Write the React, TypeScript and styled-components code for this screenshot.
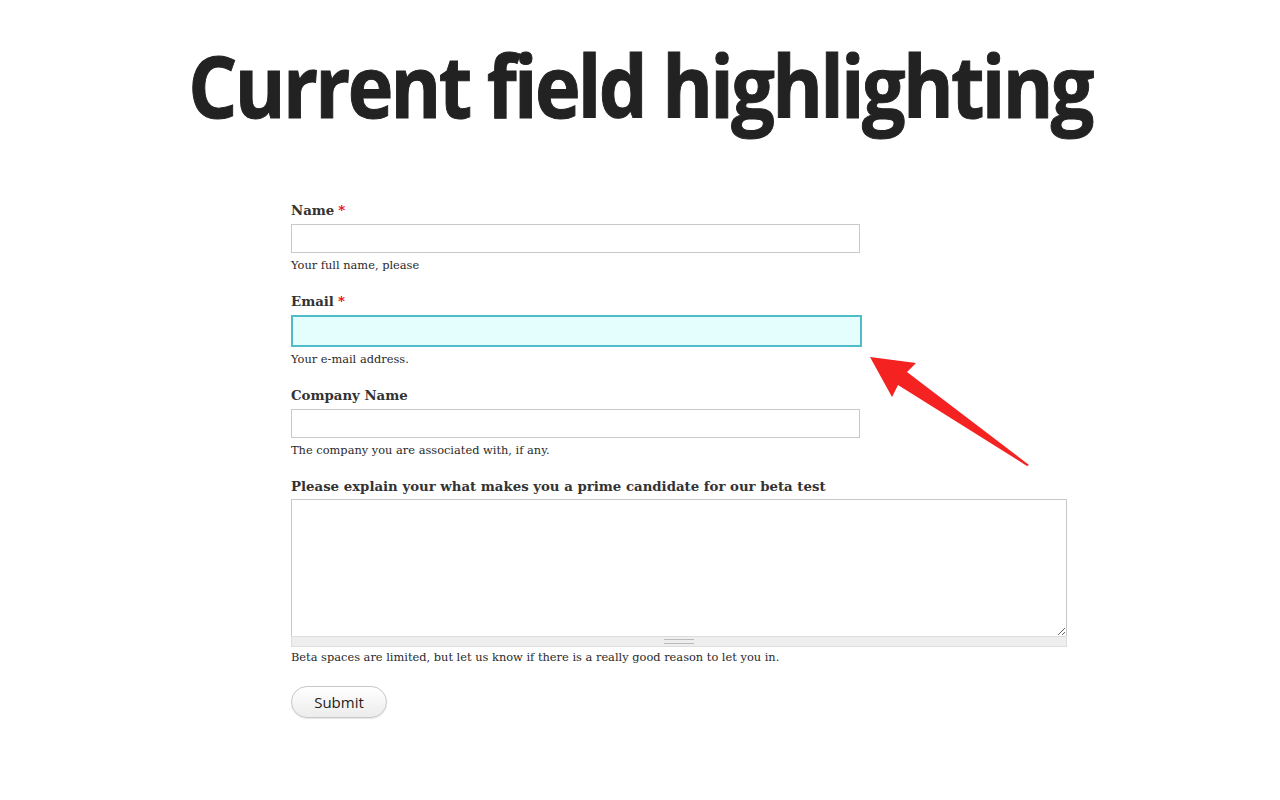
import React from "react";
import styled, { createGlobalStyle } from "styled-components";

const Global = createGlobalStyle`
  html, body { margin: 0; padding: 0; background: #fff; }
  body { font-family: "DejaVu Serif", Georgia, serif; }
`;

const Page = styled.div`
  position: relative;
  width: 1280px;
  height: 800px;
  overflow: hidden;
`;

const Title = styled.h1`
  margin: 0;
  padding-top: 30px;
  height: 110px;
  display: flex;
  justify-content: center;
  font-family: "Open Sans", "Liberation Sans", sans-serif;
  font-weight: 700;
  font-size: 86px;
  line-height: 110px;
  letter-spacing: -3px;
  color: #222;
`;

const TitleText = styled.span`
  display: inline-block;
  white-space: nowrap;
  transform: scaleX(0.898);
  transform-origin: center;
  -webkit-text-stroke: 1px #222;
`;

const Form = styled.form`
  display: flex;
  flex-direction: column;
  align-items: flex-start;
  padding-left: 291px;
  padding-top: 61px;
`;

const Field = styled.div<{ $wide?: boolean }>`
  display: flex;
  flex-direction: column;
  margin-bottom: 18px;
  width: ${(p) => (p.$wide ? "776px" : "571px")};
`;

const Label = styled.label<{ $tight?: boolean }>`
  font-family: "DejaVu Serif", Georgia, serif;
  font-weight: 700;
  font-size: 13.3px;
  line-height: 20px;
  color: #333;
  margin-bottom: ${(p) => (p.$tight ? "2px" : "3px")};
`;

const Required = styled.span`
  color: #e00;
  margin-left: 4px;
`;

const Input = styled.input<{ $focused?: boolean }>`
  box-sizing: border-box;
  width: ${(p) => (p.$focused ? "571px" : "569px")};
  height: ${(p) => (p.$focused ? "32px" : "29px")};
  margin: 0;
  border: ${(p) => (p.$focused ? "2px solid #4fbdc9" : "1px solid #c9c9c9")};
  background: ${(p) => (p.$focused ? "#e4fefd" : "#fff")};
  outline: none;
  font-size: 14px;
`;

const TextArea = styled.textarea`
  box-sizing: border-box;
  display: block;
  width: 776px;
  height: 137px;
  margin: 0;
  border: 1px solid #c9c9c9;
  border-bottom: none;
  background: #fff;
  outline: none;
  resize: vertical;
`;

const Grippie = styled.div`
  box-sizing: border-box;
  width: 776px;
  height: 11px;
  background: #eee;
  border: 1px solid #ddd;
  display: flex;
  align-items: center;
  justify-content: center;
`;

const GripLines = styled.div`
  width: 30px;
  height: 3px;
  border-top: 1px solid #bbb;
  border-bottom: 1px solid #bbb;
`;

const Description = styled.div<{ $tight?: boolean }>`
  font-family: "DejaVu Serif", Georgia, serif;
  font-size: 11.4px;
  line-height: 18px;
  color: #2a2a2a;
  margin-top: ${(p) => (p.$tight ? "1px" : "3px")};
`;

const SubmitButton = styled.button`
  box-sizing: border-box;
  width: 96px;
  height: 32px;
  margin-top: 2px;
  border: 1px solid #c8c8c8;
  border-radius: 16px;
  background: linear-gradient(#ffffff, #ececec);
  font-family: "Open Sans", "Liberation Sans", sans-serif;
  font-size: 15px;
  color: #222;
  box-shadow: 0 1px 1px rgba(0, 0, 0, 0.1);
`;

const Arrow = styled.svg`
  position: absolute;
  left: 860px;
  top: 345px;
`;

export default function App() {
  return (
    <Page>
      <Global />
      <Title>
        <TitleText>Current field highlighting</TitleText>
      </Title>
      <Form onSubmit={(e) => e.preventDefault()}>
        <Field>
          <Label>
            Name<Required>*</Required>
          </Label>
          <Input type="text" />
          <Description>Your full name, please</Description>
        </Field>
        <Field>
          <Label>
            Email<Required>*</Required>
          </Label>
          <Input type="text" $focused />
          <Description>Your e-mail address.</Description>
        </Field>
        <Field>
          <Label>Company Name</Label>
          <Input type="text" />
          <Description>The company you are associated with, if any.</Description>
        </Field>
        <Field $wide>
          <Label $tight>Please explain your what makes you a prime candidate for our beta test</Label>
          <TextArea />
          <Grippie>
            <GripLines />
          </Grippie>
          <Description $tight>
            Beta spaces are limited, but let us know if there is a really good reason to let you in.
          </Description>
        </Field>
        <SubmitButton type="submit">Submit</SubmitButton>
      </Form>
      <Arrow width="180" height="130" viewBox="0 0 180 130">
        <path
          d="M10 12 L 56 18 L 47 27 L 169 120 L 167 121 L 38 40 L 32 52 Z"
          fill="#f52222"
        />
      </Arrow>
    </Page>
  );
}
